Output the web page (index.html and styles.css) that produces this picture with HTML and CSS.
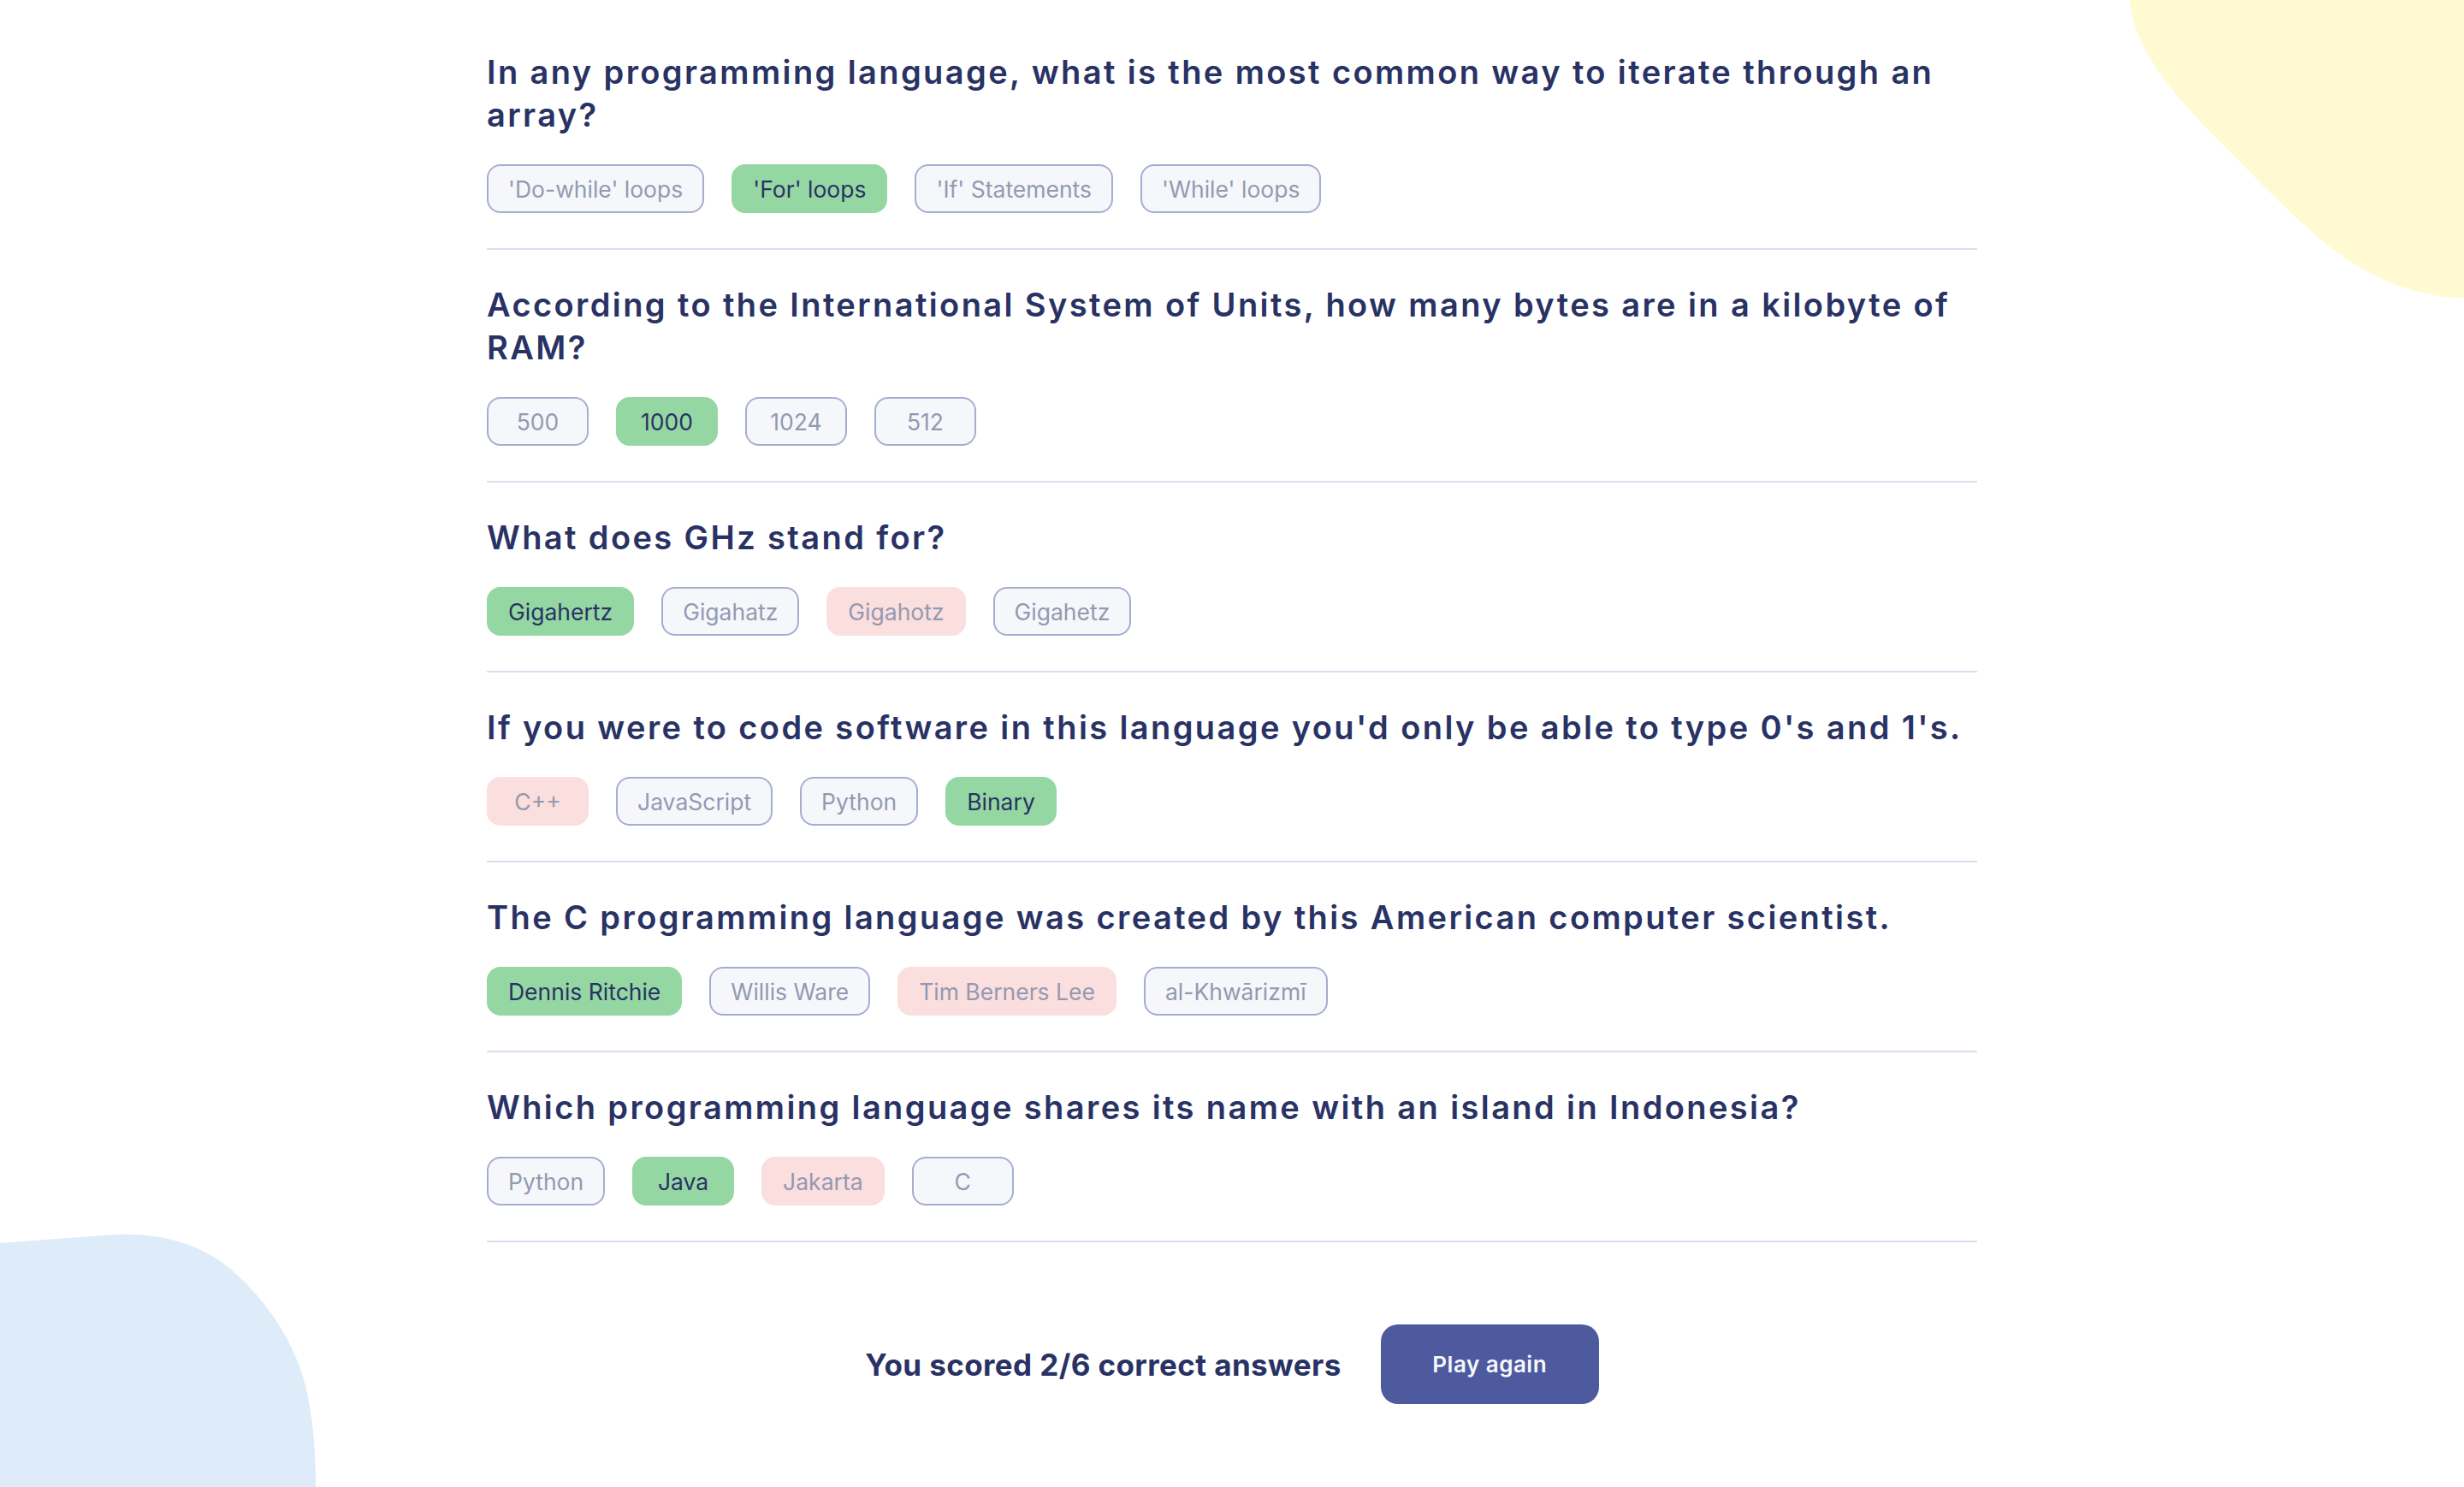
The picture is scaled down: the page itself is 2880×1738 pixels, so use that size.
FILE: index.html
```html
<!DOCTYPE html>
<html lang="en">
<head>
<meta charset="utf-8">
<title>Quizzical</title>
<link rel="stylesheet" href="styles.css">
</head>
<body>
<svg class="blob blob-yellow" width="391" height="349" viewBox="0 0 391 349"><path d="M0,0 C6,55 45,105 105,165 C150,210 200,265 250,300 C290,328 340,348 391,348 L391,0 Z" fill="#fffad1"/></svg>
<svg class="blob blob-blue" width="370" height="298" viewBox="0 0 370 298"><path d="M0,13 L133,3 C200,0 245,20 277,50 C320,90 350,140 360,193 C367,230 369,260 369,298 L0,298 Z" fill="#deebf8"/></svg>
<main class="quiz">
  <section class="question">
    <h2 class="question-title">In any programming language, what is the most common way to iterate through an array?</h2>
    <div class="answers">
      <span class="answer">'Do-while' loops</span>
      <span class="answer correct">'For' loops</span>
      <span class="answer">'If' Statements</span>
      <span class="answer">'While' loops</span>
    </div>
  </section>
  <section class="question">
    <h2 class="question-title">According to the International System of Units, how many bytes are in a kilobyte of RAM?</h2>
    <div class="answers">
      <span class="answer">500</span>
      <span class="answer correct">1000</span>
      <span class="answer">1024</span>
      <span class="answer">512</span>
    </div>
  </section>
  <section class="question">
    <h2 class="question-title">What does GHz stand for?</h2>
    <div class="answers">
      <span class="answer correct">Gigahertz</span>
      <span class="answer">Gigahatz</span>
      <span class="answer wrong">Gigahotz</span>
      <span class="answer">Gigahetz</span>
    </div>
  </section>
  <section class="question">
    <h2 class="question-title">If you were to code software in this language you'd only be able to type 0's and 1's.</h2>
    <div class="answers">
      <span class="answer wrong">C++</span>
      <span class="answer">JavaScript</span>
      <span class="answer">Python</span>
      <span class="answer correct">Binary</span>
    </div>
  </section>
  <section class="question">
    <h2 class="question-title">The C programming language was created by this American computer scientist.</h2>
    <div class="answers">
      <span class="answer correct">Dennis Ritchie</span>
      <span class="answer">Willis Ware</span>
      <span class="answer wrong">Tim Berners Lee</span>
      <span class="answer">al-Khwārizmī</span>
    </div>
  </section>
  <section class="question">
    <h2 class="question-title">Which programming language shares its name with an island in Indonesia?</h2>
    <div class="answers">
      <span class="answer">Python</span>
      <span class="answer correct">Java</span>
      <span class="answer wrong">Jakarta</span>
      <span class="answer">C</span>
    </div>
  </section>
  <footer class="result">
    <p class="score">You scored 2/6 correct answers</p>
    <button class="play-again" type="button">Play again</button>
  </footer>
</main>
</body>
</html>
```
FILE: styles.css
```css
html, body {
  margin: 0;
  padding: 0;
}
body {
  background: #ffffff;
  font-family: Inter, "Open Sans", sans-serif;
  color: #293264;
  min-height: 1738px;
  position: relative;
  overflow: hidden;
}
.blob {
  position: absolute;
  display: block;
}
.blob-yellow {
  top: 0;
  right: 0;
}
.blob-blue {
  left: 0;
  top: 1440px;
}
.quiz {
  position: relative;
  width: 1742px;
  margin: 0 auto;
  padding-top: 20px;
}
.question {
  padding: 39px 0 41px;
  border-bottom: 2px solid #dbdef0;
}
.question-title {
  margin: 0;
  font-family: Inter, sans-serif;
  font-weight: 600;
  font-size: 38px;
  line-height: 50px;
  letter-spacing: 2.4px;
  color: #293264;
}
.answers {
  display: flex;
  gap: 32px;
  margin-top: 33px;
}
.answer {
  box-sizing: border-box;
  height: 57px;
  min-width: 119px;
  padding: 0 23px;
  display: inline-flex;
  align-items: center;
  justify-content: center;
  border: 2px solid #a6add0;
  border-radius: 16px;
  background: #f5f7fb;
  font-size: 26.5px;
  color: #9499b1;
}
.answer.correct {
  background: #94d7a2;
  border-color: #94d7a2;
  color: #293264;
}
.answer.wrong {
  background: #fbdede;
  border-color: #fbdede;
  color: #9499b1;
}
.result {
  display: flex;
  justify-content: center;
  align-items: center;
  gap: 46px;
  margin-top: 96px;
}
.score {
  margin: 0;
  font-weight: 700;
  font-size: 35px;
  letter-spacing: 0.4px;
  color: #293264;
}
.play-again {
  box-sizing: border-box;
  width: 255px;
  height: 93px;
  border: none;
  border-radius: 20px;
  background: #4d5b9e;
  color: #f5f7fb;
  font-family: Inter, sans-serif;
  font-weight: 600;
  font-size: 26px;
  letter-spacing: 0.5px;
}
```
